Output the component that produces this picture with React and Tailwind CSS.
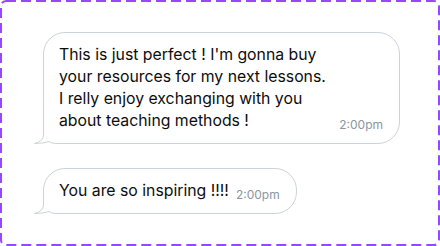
import React from "react";

const FONT = { fontFamily: "Inter, 'Noto Sans', sans-serif" };

function Tail() {
  // little speech tail hanging off the bubble's bottom-left corner
  return (
    <svg
      className="absolute left-[-12px] bottom-[-1px]"
      width="24"
      height="14"
      viewBox="0 0 24 14"
      fill="none"
    >
      <rect x="0" y="0" width="24" height="14" fill="#ffffff" />
      <path
        d="M11.5 0 L11.5 5 Q11.5 11 2.5 13.5 Q11 13.5 17 11.5 Q19.5 13.5 24 13.5"
        stroke="#cdd3d9"
        strokeWidth="1"
        fill="#ffffff"
      />
    </svg>
  );
}

function Bubble({ children, time, className = "" }) {
  return (
    <div
      className={`relative flex items-end border border-[#cdd3d9] rounded-[22px] rounded-bl-none bg-white pl-[15px] pr-4 py-[11px] ${className}`}
    >
      <div className="shrink-0 whitespace-nowrap text-[15.8px] leading-[22px] text-[#0d0d0d]">
        {children}
      </div>
      <span className="ml-auto pl-[7px] text-[12px] leading-[14px] text-[#8a96a2] whitespace-nowrap">
        {time}
      </span>
      <Tail />
    </div>
  );
}

export default function App() {
  return (
    <div className="relative w-[440px] h-[246px] bg-white" style={FONT}>
      <svg className="absolute inset-0 pointer-events-none" width="440" height="246">
        <rect
          x="1"
          y="1"
          width="438"
          height="244"
          rx="5"
          fill="none"
          stroke="#9747ff"
          strokeWidth="2"
          strokeDasharray="10 5"
        />
      </svg>
      <div className="flex flex-col items-start gap-6 pt-8 pl-[43px]">
        <Bubble time="2:00pm" className="w-[357px]">
          This is just perfect ! I'm gonna buy
          <br />
          your resources for my next lessons.
          <br />
          I relly enjoy exchanging with you
          <br />
          about teaching methods !
        </Bubble>
        <Bubble time="2:00pm">You are so inspiring !!!!</Bubble>
      </div>
    </div>
  );
}
